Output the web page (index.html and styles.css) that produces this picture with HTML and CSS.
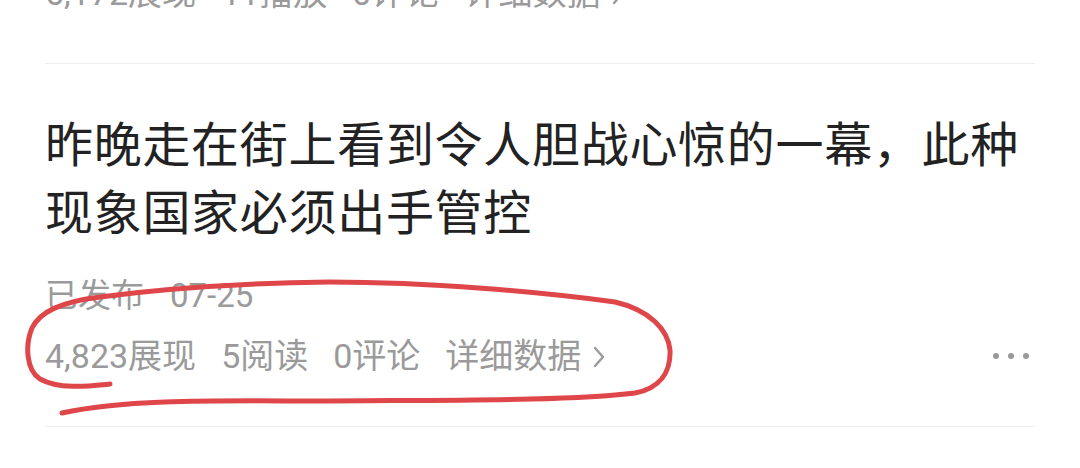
FILE: index.html
```html
<!DOCTYPE html>
<html lang="zh-CN">
<head>
    <meta charset="UTF-8">
    <meta name="viewport" content="width=device-width, initial-scale=1.0">
    <title>作品管理</title>
    <link rel="stylesheet" href="styles.css">
</head>
<body>
    <div class="list">
        <div class="item prev">
            <div class="stats">
                <span>6,172展现</span>
                <span>11播放</span>
                <span>0评论</span>
                <span class="more-link">详细数据
                    <svg class="arrow" width="12" height="22" viewBox="0 0 12 22"><path d="M2 2 L10 11 L2 20" /></svg>
                </span>
            </div>
        </div>

        <div class="item">
            <h2 class="title">昨晚走在街上看到令人胆战心惊的一幕，此种现象国家必须出手管控</h2>
            <div class="meta">已发布<span class="date">07-25</span></div>
            <div class="stats">
                <span>4,823展现</span>
                <span>5阅读</span>
                <span>0评论</span>
                <span class="more-link">详细数据
                    <svg class="arrow" width="12" height="22" viewBox="0 0 12 22"><path d="M2 2 L10 11 L2 20" /></svg>
                </span>
                <span class="dots"><i></i><i></i><i></i></span>
            </div>
        </div>
    </div>

    <!-- 红笔圈出来的标记 -->
    <svg class="mark" width="1080" height="468" viewBox="0 0 1080 468">
        <path d="M110 384 C 90 386, 60 390, 40 379 C 26 370, 25 345, 32 328 C 40 312, 60 302, 100 297 C 170 288, 250 283, 330 282 C 430 282, 540 292, 615 302 C 650 310, 668 330, 670 350 C 671 372, 660 388, 635 393 C 570 401, 450 400, 330 401 C 230 401, 130 398, 62 413" />
    </svg>
</body>
</html>
```

FILE: styles.css
```css
body {
    margin: 0;
    background: #fff;
    font-family: Roboto, "Noto Sans CJK SC", sans-serif;
    position: relative;
    height: 468px;
    overflow: hidden;
}
.list {
    margin: 0 45px;
}
.item {
    border-bottom: 1px solid #eeeeee;
    padding-bottom: 40px;
}
.item.prev {
    margin-top: -37px;
    padding-bottom: 40px;
}
.title {
    margin: 0;
    padding-top: 48px;
    font-size: 48px;
    font-weight: normal;
    line-height: 68px;
    letter-spacing: 0.7px;
    color: #222;
}
.meta {
    margin-top: 18px;
    font-size: 33px;
    line-height: 60px;
    color: #9a9a9a;
}
.meta .date {
    margin-left: 26px;
}
.stats {
    display: flex;
    align-items: center;
    font-size: 34px;
    line-height: 60px;
    color: #9a9a9a;
}
.stats > span {
    margin-right: 25px;
}
.more-link {
    display: flex;
    align-items: center;
}
.arrow {
    margin-left: 12px;
    margin-top: 2px;
}
.arrow path {
    fill: none;
    stroke: #9a9a9a;
    stroke-width: 2.4;
    stroke-linecap: round;
    stroke-linejoin: round;
}
.stats .dots {
    margin: 0 6px 0 auto;
    display: flex;
    gap: 9px;
}
.dots i {
    width: 6px;
    height: 6px;
    border-radius: 50%;
    background: #999;
}
.mark {
    position: absolute;
    left: 0;
    top: 0;
    pointer-events: none;
}
.mark path {
    fill: none;
    stroke: #df4649;
    stroke-width: 5;
    stroke-linecap: round;
    stroke-linejoin: round;
}
```
